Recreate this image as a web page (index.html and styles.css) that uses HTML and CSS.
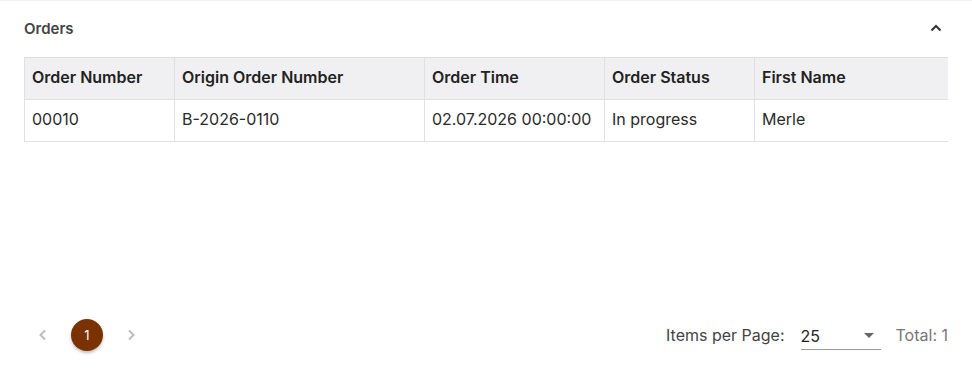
FILE: index.html
```html
<!DOCTYPE html>
<html>
<head>
<meta charset="utf-8">
<link rel="stylesheet" href="styles.css">
</head>
<body>
<div class="card">
  <div class="card-head">
    <span class="title">Orders</span>
    <svg class="collapse" width="14" height="14" viewBox="0 0 14 14"><path d="M2.5 9.5 L7 5 L11.5 9.5" fill="none" stroke="#333" stroke-width="2"/></svg>
  </div>
  <div class="table-wrap">
    <table class="grid">
      <colgroup>
        <col class="c1"><col class="c2"><col class="c3"><col class="c4"><col class="c5">
      </colgroup>
      <thead>
        <tr><th>Order Number</th><th>Origin Order Number</th><th>Order Time</th><th>Order Status</th><th>First Name</th></tr>
      </thead>
      <tbody>
        <tr><td>00010</td><td>B-2026-0110</td><td>02.07.2026 00:00:00</td><td>In progress</td><td>Merle</td></tr>
      </tbody>
    </table>
  </div>
  <div class="pager">
    <div class="pages">
      <span class="arrow"><svg width="12" height="14" viewBox="0 0 12 14"><path d="M8 2.5 L3.5 7 L8 11.5" fill="none" stroke="#bdbdbd" stroke-width="2"/></svg></span>
      <span class="page active">1</span>
      <span class="arrow"><svg width="12" height="14" viewBox="0 0 12 14"><path d="M4 2.5 L8.5 7 L4 11.5" fill="none" stroke="#bdbdbd" stroke-width="2"/></svg></span>
    </div>
    <div class="meta">
      <span class="ipp">Items per Page:</span>
      <span class="select"><span>25</span><svg width="10" height="5" viewBox="0 0 10 5"><path d="M0 0 L10 0 L5 5 Z" fill="#666"/></svg></span>
      <span class="total">Total: 1</span>
    </div>
  </div>
</div>
</body>
</html>
```

FILE: styles.css
```css
html, body {
  margin: 0;
  padding: 0;
  background: #fff;
}
body {
  font-family: Inter, "Noto Sans", sans-serif;
  color: #222;
}
.card {
  height: 380px;
  box-sizing: border-box;
  border-top: 1px solid #f2f2f2;
  display: flex;
  flex-direction: column;
}
.card-head {
  height: 56px;
  padding: 0 29px 0 24px;
  display: flex;
  align-items: center;
  justify-content: space-between;
}
.title {
  font-size: 15px;
  font-weight: 600;
  color: #444;
  margin-top: -2px;
}
.collapse {
  display: block;
  margin-top: -2px;
}
.table-wrap {
  margin: 0 24px;
  overflow: hidden;
  height: 254px;
}
.grid {
  border-collapse: collapse;
  table-layout: fixed;
  width: 932px;
  font-size: 16px;
}
.c1 { width: 150px; }
.c2 { width: 250px; }
.c3 { width: 180px; }
.c4 { width: 150px; }
.c5 { width: 202px; }
.grid th, .grid td {
  border: 1px solid #e0e0e0;
  height: 42px;
  padding: 0 7px 4px;
  box-sizing: border-box;
  text-align: left;
  white-space: nowrap;
  overflow: hidden;
}
.grid th {
  background: #f0f0f2;
  font-weight: 600;
  color: #222;
}
.grid td {
  color: #2a2a2a;
}
.pager {
  height: 48px;
  padding: 0 24px 0 37px;
  display: flex;
  align-items: center;
  justify-content: space-between;
}
.pages {
  display: flex;
  align-items: center;
  gap: 22px;
}
.arrow {
  display: flex;
  width: 12px;
  justify-content: center;
}
.page {
  width: 32px;
  height: 32px;
  border-radius: 50%;
  display: flex;
  align-items: center;
  justify-content: center;
  font-size: 13px;
  color: #fff;
}
.page.active {
  background: #7a3300;
  box-shadow: 0 2px 3px rgba(0,0,0,0.25);
}
.meta {
  display: flex;
  align-items: center;
  font-size: 16px;
  color: #444;
}
.select {
  margin-left: 16px;
  width: 80px;
  box-sizing: border-box;
  height: 30px;
  border-bottom: 1px solid #999;
  display: flex;
  align-items: center;
  justify-content: space-between;
  padding: 2px 7px 0 0;
  color: #222;
}
.total {
  margin-left: 15px;
  color: #777;
}
```
